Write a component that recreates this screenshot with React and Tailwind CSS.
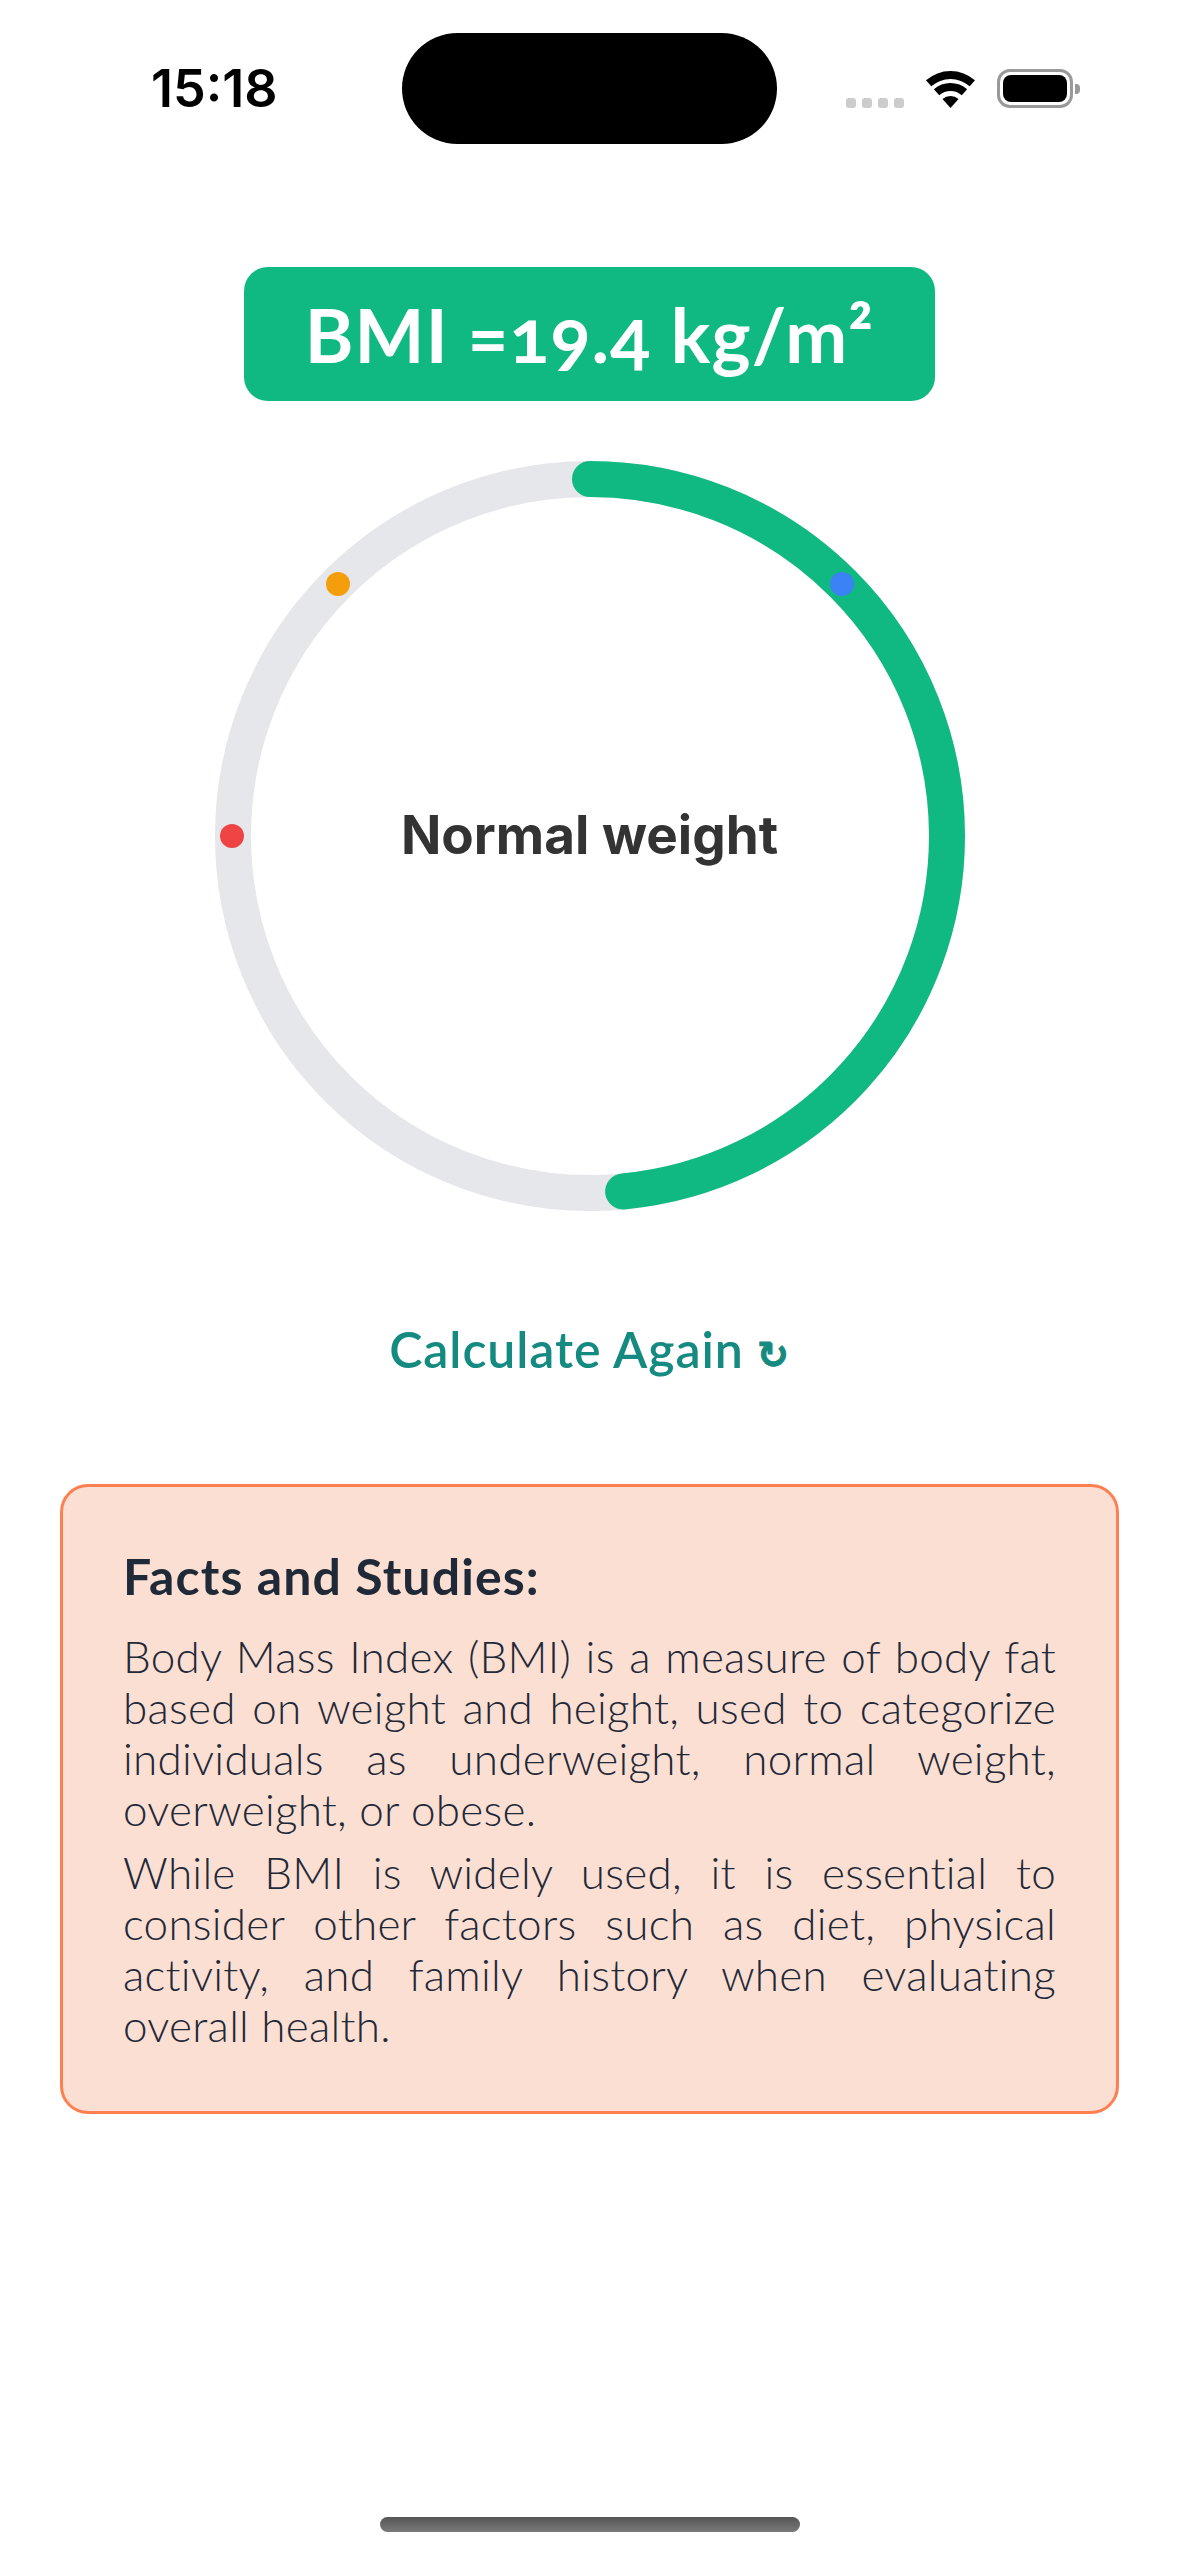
import React from "react";

const RADIUS = 357;
const CIRC = 2 * Math.PI * RADIUS;
const BMI_PCT = 19.4 / 40;

function Wifi() {
  return (
    <svg width="49" height="37" viewBox="0 0 49 37" fill="#000">
      <path d="M0 9.3A37 37 0 0 1 49 9.3L43.7 15.3A29 29 0 0 0 5.3 15.3Z" />
      <path d="M7.9 18.3A25 25 0 0 1 41.1 18.3L35.8 24.3A17 17 0 0 0 13.2 24.3Z" />
      <path d="M16.5 28A12 12 0 0 1 32.5 28L24.5 37Z" />
    </svg>
  );
}

function Battery() {
  return (
    <div className="flex items-center gap-[2px]">
      <div className="w-[76px] h-[39px] border-[3px] border-[#999999] rounded-[13px] p-[3px]">
        <div className="h-full bg-black rounded-[8px]" />
      </div>
      <div className="w-[5px] h-[10px] bg-[#999999] rounded-r-[4px]" />
    </div>
  );
}

function StatusBar() {
  return (
    <div className="flex items-center h-[111px] mt-[33px] font-['Inter',sans-serif]">
      <div className="w-[402px] pl-[151px] text-[52px] font-semibold leading-none text-black">15:18</div>
      <div className="w-[375px] h-[111px] rounded-full bg-black" />
      <div className="flex items-end gap-[22px] ml-[69px]">
        <div className="flex gap-[6px]">
          <div className="w-[10px] h-[10px] rounded-[3px] bg-[#cccccc]" />
          <div className="w-[10px] h-[10px] rounded-[3px] bg-[#cccccc]" />
          <div className="w-[10px] h-[10px] rounded-[3px] bg-[#cccccc]" />
          <div className="w-[10px] h-[10px] rounded-[3px] bg-[#cccccc]" />
        </div>
        <Wifi />
        <Battery />
      </div>
    </div>
  );
}

function Gauge() {
  return (
    <div className="relative w-[750px] h-[750px] mt-[60px]">
      <svg width="750" height="750" viewBox="0 0 750 750">
        <circle cx="375" cy="375" r={RADIUS} fill="none" stroke="#e5e7eb" strokeWidth="36" />
        <circle
          cx="375"
          cy="375"
          r={RADIUS}
          fill="none"
          stroke="#10b981"
          strokeWidth="36"
          strokeLinecap="round"
          strokeDasharray={`${CIRC * BMI_PCT} ${CIRC}`}
          transform="rotate(-90 375 375)"
        />
        <circle cx="627" cy="123" r="12" fill="#3b82f6" />
        <circle cx="123" cy="123" r="12" fill="#f59e0b" />
        <circle cx="17" cy="375" r="12" fill="#ef4444" />
      </svg>
      <div className="absolute inset-0 flex items-center justify-center font-['Inter',sans-serif] text-[53px] font-bold text-[#333333]">
        Normal weight
      </div>
    </div>
  );
}

export default function App() {
  return (
    <div className="w-[1179px] h-[2556px] bg-white flex flex-col font-['Lato',sans-serif]">
      <StatusBar />

      <div className="flex flex-col items-center">
        <div className="mt-[123px] w-[691px] h-[134px] flex items-center justify-center rounded-[24px] bg-[#10b981] text-white text-[74px] font-bold tracking-[1.2px] oldstyle-nums">
          BMI =19.4 kg/m²
        </div>

        <Gauge />

        <div className="mt-[108px] h-[60px] text-[50px] leading-[60px] font-semibold tracking-[0.9px] text-[#148a80]">
          Calculate Again <span className="text-[38px] leading-none font-bold font-['DejaVu_Sans',sans-serif] [-webkit-text-stroke:1px_#148a80]">↻</span>
        </div>
      </div>

      <div className="mt-[105px] mx-[60px] pt-[59px] pl-[60px] pr-[60px] pb-[60px] rounded-[28px] border-[3px] border-[#ff7f50] bg-[#fcdfd3] text-[#1f2937]">
        <h2 className="text-[50px] leading-[60px] font-bold tracking-[1.1px] mb-[25px]">Facts and Studies:</h2>
        <p className="text-[44px] leading-[51px] font-light tracking-[0.25px] text-justify mb-[12px]">
          Body Mass Index (BMI) is a measure of body fat based on weight and height, used to categorize individuals as underweight, normal weight, overweight, or obese.
        </p>
        <p className="text-[44px] leading-[51px] font-light tracking-[0.25px] text-justify">
          While BMI is widely used, it is essential to consider other factors such as diet, physical activity, and family history when evaluating overall health.
        </p>
      </div>

      <div className="mt-auto mb-[24px] mx-auto w-[420px] h-[15px] rounded-full bg-gradient-to-b from-[#555555] to-[#7a7a7a]" />
    </div>
  );
}
